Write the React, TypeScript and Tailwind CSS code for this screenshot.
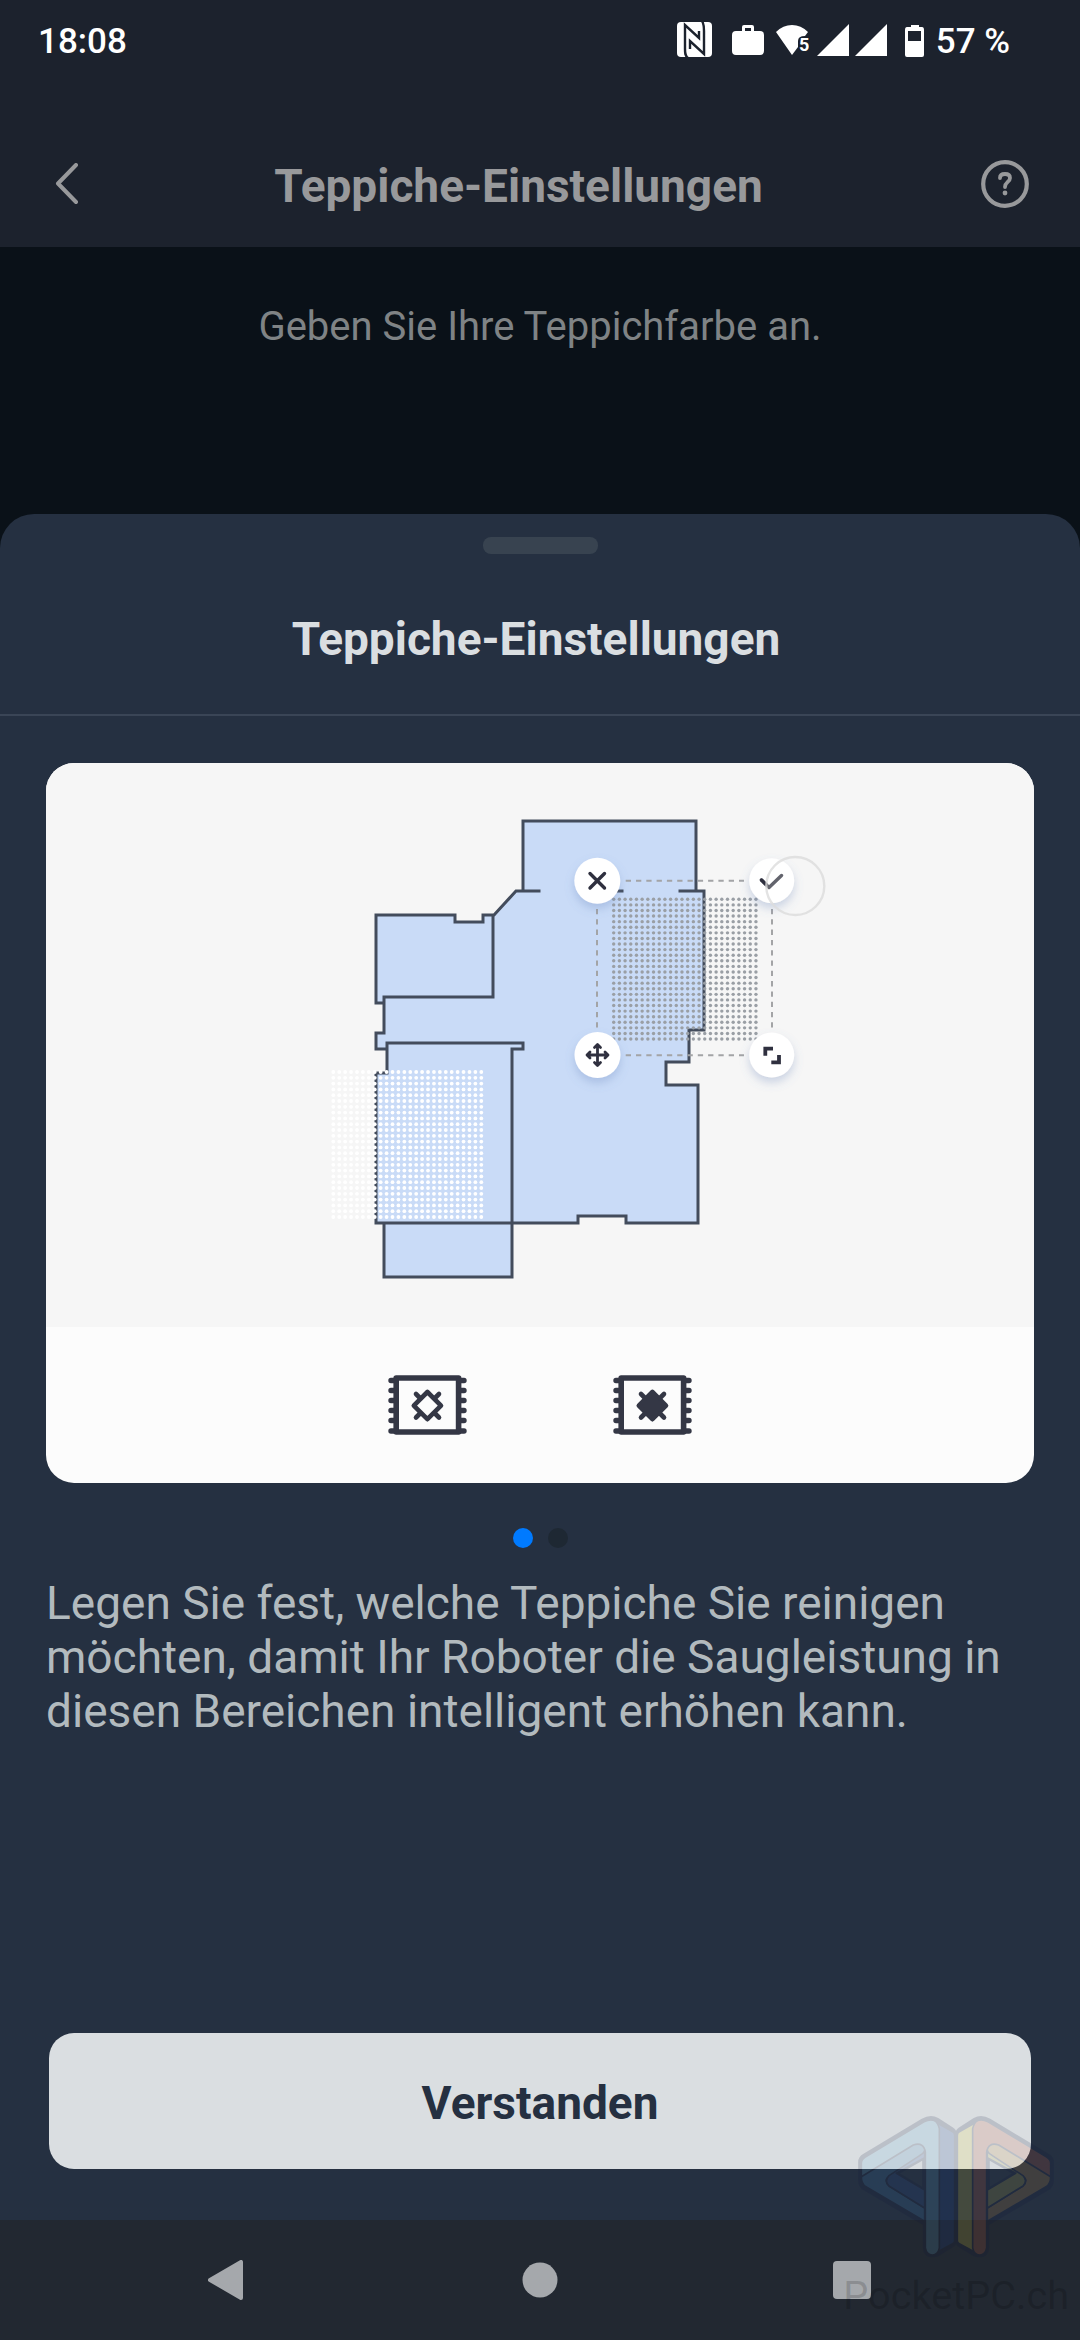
import React from "react";

const FLOOR_LINE = "#434c5c";

const ROOM_OUTLINE =
  "M523 821H696V891H704V1030H689V1062H666V1085H698V1223H626V1216H578V1223H512V1277H384V1223H376V1073H387V1049H376V1033H384V1003H376V915H455V922H483V915H494L516 891H523Z";

const ROOM_WALLS =
  "M523 891V821H696V891M539 891H516L494 915M600 891H622M680 891H704V1030H689V1062H666V1085H698V1223H626V1216H578V1223H376V1073H387V1043H523V1049H512V1277H384V1223M493 915V997H384V1033H376V1049H387M493 915H483V922H455V915H376V1003H384";

const StatusIcons: React.FC = () => (
  <div className="flex items-center text-white">
    <svg className="mr-[19px]" width="36" height="40" viewBox="0 0 36 40" fill="none">
      <rect width="35" height="35" rx="4" fill="currentColor" />
      <path
        d="M11 36C8 34 8 31 8 27V3L22 16V9M25 -1C27 2 27 5 27 9V32L13 19V27"
        stroke="#1c222d"
        strokeWidth="2.4"
      />
    </svg>
    <svg className="mr-3" width="32" height="40" viewBox="0 0 32 40" fill="currentColor">
      <path d="M4 9H10V5Q10 3 12 3H20Q22 3 22 5V9H28Q32 9 32 13V29Q32 33 28 33H4Q0 33 0 29V13Q0 9 4 9ZM13 6V9H19V6Z" fillRule="evenodd" />
    </svg>
    <svg className="mr-2" width="33" height="40" viewBox="0 0 33 40" fill="currentColor">
      <path d="M0 10Q7 3 16 3T32 10L29 14Q22 14 22 19V25L16 33Z" />
      <text x="23" y="29" fontSize="18" fontWeight="700" fontFamily="Roboto">5</text>
    </svg>
    <svg className="mr-1.5" width="32" height="40" viewBox="0 0 32 40" fill="currentColor">
      <path d="M0 34L32 2V34Z" />
    </svg>
    <svg className="mr-[18px]" width="32" height="40" viewBox="0 0 32 40" fill="currentColor">
      <path d="M0 34L32 2V34Z" />
    </svg>
    <svg className="mr-3" width="19" height="40" viewBox="0 0 19 40" fill="currentColor">
      <path d="M2 5H6V3H14V5H17Q19 5 19 8V33Q19 35 17 35H2Q0 35 0 33V8Q0 5 2 5ZM3 9V19H16V9Z" fillRule="evenodd" />
    </svg>
    <span>57 %</span>
  </div>
);

type DotsProps = { x: number; y: number; dx: number; dy: number; r: number; fill: string };

const CarpetDots: React.FC<DotsProps> = ({ x, y, dx, dy, r, fill }) => (
  <g fill={fill}>
    {Array.from({ length: 26 * 26 }, (_, i) => (
      <circle key={i} cx={x + (i % 26) * dx} cy={y + Math.floor(i / 26) * dy} r={r} />
    ))}
  </g>
);

const FloorPlan: React.FC = () => (
  <svg className="block w-full h-auto bg-[#f6f6f6]" viewBox="46 763 988 564" fill="none">
    <defs>
      <filter id="knob" x="-40%" y="-40%" width="180%" height="200%">
        <feDropShadow dx="0" dy="5" stdDeviation="5" floodColor="#5f7fb5" floodOpacity="0.3" />
      </filter>
    </defs>
    <path d={ROOM_OUTLINE} fill="#c9dbf7" />
    <path d={ROOM_WALLS} stroke={FLOOR_LINE} strokeWidth="3" strokeLinecap="square" />
    <CarpetDots x={333.3} y={1072} dx={5.92} dy={5.8} r={1.9} fill="#ffffff" />
    <CarpetDots x={613.7} y={899.3} dx={5.69} dy={5.59} r={1.7} fill="#9a9fa5" />
    <path
      d="M625.7 880.7H744M625.7 1055.3H744M597 909V1028M772 909V1028"
      stroke="#a3a4a6"
      strokeWidth="2"
      strokeDasharray="5.3 5"
    />
    <g fill="#ffffff" filter="url(#knob)">
      <circle cx="597.3" cy="880.7" r="23" />
      <circle cx="771.7" cy="880.7" r="22.5" />
      <circle cx="597.5" cy="1055" r="23" />
      <circle cx="771.7" cy="1055" r="22.5" />
    </g>
    <g stroke="#2f303f" strokeWidth="3.4" strokeLinecap="round" strokeLinejoin="round">
      <path d="M590 873.5L604.5 888M604.5 873.5L590 888" />
      <path
        d="M597.5 1045V1065M587.5 1055H607.5M594.5 1047.5L597.5 1044.5L600.5 1047.5M594.5 1062.5L597.5 1065.5L600.5 1062.5M590 1052L587 1055L590 1058M605 1052L608 1055L605 1058"
        strokeWidth="2.8"
      />
      <path d="M761.5 880L769 887.5L781.5 875.5" stroke="#63646d" />
      <path d="M761.5 880L766 884.5" />
    </g>
    <path d="M765.3 1055.7V1048.7H773M771.3 1062.3H779V1055" stroke="#2f303f" strokeWidth="3.8" />
    <circle cx="795.3" cy="886" r="29" stroke="#dcdcdc" strokeOpacity="0.8" strokeWidth="2.4" />
  </svg>
);

const CarpetIcon: React.FC<{ filled?: boolean }> = ({ filled }) => (
  <svg width="79" height="60" viewBox="0 0 79 60" fill="none" stroke="#343745">
    <rect x="8.2" y="3" width="62.4" height="54" strokeWidth="5.6" strokeLinejoin="round" />
    <path
      d="M3 5.5H8M3 15.5H8M3 25.5H8M3 35.5H8M3 45.5H8M3 56H8M71 5.5H76M71 15.5H76M71 25.5H76M71 35.5H76M71 45.5H76M71 56H76"
      strokeWidth="5.4"
      strokeLinecap="round"
    />
    <path
      d="M39.4 17L53 30.6L39.4 44.2L25.8 30.6Z"
      fill={filled ? "#343745" : "none"}
      strokeWidth="4.6"
      strokeLinejoin="round"
    />
    <path
      d="M28 19L32 23M51 19L47 23M28 42.5L32 38.5M51 42.5L47 38.5"
      strokeWidth="4.6"
      strokeLinecap="round"
    />
  </svg>
);

type LogoHalfProps = { side: string; front: string; band: string; inner: string };

const LogoHalf: React.FC<LogoHalfProps> = ({ side, front, band, inner }) => (
  <g stroke="#0a1238" strokeWidth="5" strokeLinejoin="round">
    <path
      d="M308 121Q332 107 352 119L396 147Q404 152 404 160V484Q404 492 396 497L352 524Q314 534 314 500V432L134 326Q120 318 120 302V246Q120 234 132 227ZM229 280L312 330V233Z"
      fill="#0a1238"
      fillRule="evenodd"
      strokeWidth="11"
    />
    <path d="M345 125L398 155Q404 158 404 166V482Q404 488 398 491L345 520Z" fill={side} />
    <path d="M124 290Q124 312 138 320L314 424V384L207 318Q190 302 207 285L290 192Z" fill={band} />
    <path d="M124 290L280 195Q312 185 315 217L207 287L180 310Z" fill={band} stroke="none" />
    <path d="M229 280L314 330V384L207 318Q192 302 207 287L300 226Q314 218 314 210V233Z" fill={inner} />
    <path
      d="M124 290V250Q124 238 136 231L312 125Q350 108 358 146V504Q354 525 337 525T316 504V217Q312 185 280 195Z"
      fill={front}
    />
  </g>
);

const Watermark: React.FC = () => (
  <svg
    className="absolute bottom-0 right-0 pointer-events-none"
    width="260"
    height="260"
    viewBox="0 0 780 780"
  >
    <g opacity="0.14">
      <LogoHalf side="#0f3c9b" front="#62b9e4" band="#3c90cc" inner="#2450a8" />
      <g transform="matrix(-1 0 0 1 816 0)">
        <LogoHalf side="#ffe632" front="#e06038" band="#e09a38" inner="#d8c840" />
      </g>
    </g>
    <text x="70" y="688" fontSize="119" fontFamily="Roboto" fill="#000000" fillOpacity="0.17">
      PocketPC.ch
    </text>
  </svg>
);

const App: React.FC = () => {
  return (
    <div className="relative flex min-h-screen flex-col bg-[#0a1118] font-['Roboto',sans-serif]">
      <header className="bg-[#1c222d]">
        <div className="flex h-21 items-center justify-between pl-[38px] pr-[70px] text-[35px] leading-[42px] font-medium text-white">
          <span>18:08</span>
          <StatusIcons />
        </div>
        <div className="flex h-[163px] items-center pl-[54px] pr-[51px] pt-10 text-[#98999b]">
          <button aria-label="Zurück">
            <svg width="26" height="46" viewBox="0 0 26 46" fill="none">
              <path d="M22 2L4 20.5L22 39" stroke="currentColor" strokeWidth="4" strokeLinecap="round" strokeLinejoin="round" />
            </svg>
          </button>
          <h1 className="flex-1 pr-6 text-center text-[46px] leading-[54px] font-bold">
            Teppiche-Einstellungen
          </h1>
          <button aria-label="Hilfe">
            <svg width="48" height="52" viewBox="0 0 48 52" fill="none" stroke="currentColor" strokeLinecap="round">
              <circle cx="24" cy="24" r="21.8" strokeWidth="4.2" />
              <path d="M19 18Q19 14 24 14T29 18C29 22 24 22 24 27" strokeWidth="3.8" />
              <circle cx="24" cy="33" r="2.4" fill="currentColor" stroke="none" />
            </svg>
          </button>
        </div>
      </header>

      <p className="px-12 pt-14 pb-[163px] text-center text-[40px] leading-[48px] text-[#7f8385]">
        Geben Sie Ihre Teppichfarbe an.
      </p>

      <section className="flex flex-1 flex-col rounded-t-[34px] bg-[#253041]">
        <div className="mx-auto mt-[23px] h-[17px] w-[115px] rounded-lg bg-[#384350]" />
        <h2 className="mt-[58px] pr-2 pb-12 text-center text-[46px] leading-[54px] font-bold text-[#dadee1]">
          Teppiche-Einstellungen
        </h2>
        <hr className="border-t-2 border-[#3a4556]" />
        <div className="mx-[46px] mt-[47px] overflow-hidden rounded-[28px] bg-[#fcfcfc]">
          <FloorPlan />
          <div className="flex h-39 items-center justify-center gap-[146px]">
            <CarpetIcon />
            <CarpetIcon filled />
          </div>
        </div>
        <div className="mt-[45px] flex justify-center gap-[15px]">
          <span className="size-5 rounded-full bg-[#007aff]" />
          <span className="size-5 rounded-full bg-[#1e2833]" />
        </div>
        <p className="mx-[46px] mt-7 mb-12 text-[46px] leading-[54px] text-[#b2babe]">
          Legen Sie fest, welche Teppiche Sie reinigen möchten, damit Ihr Roboter die Saugleistung in
          diesen Bereichen intelligent erhöhen kann.
        </p>
        <button className="mx-[49px] mt-auto mb-[51px] h-34 rounded-[25px] bg-[#dadee1] pt-1 text-[46px] leading-[54px] font-bold text-[#253041]">
          Verstanden
        </button>
      </section>

      <nav className="flex h-30 items-center justify-center gap-[272px] bg-[#222831] text-[#a5a8ac]">
        <button aria-label="Zurück">
          <svg width="40" height="40" viewBox="0 0 40 40" fill="currentColor" stroke="currentColor" strokeWidth="4" strokeLinejoin="round">
            <path d="M2 20L33 2V38Z" />
          </svg>
        </button>
        <button aria-label="Startseite">
          <svg width="40" height="40" viewBox="0 0 40 40" fill="currentColor">
            <circle cx="20" cy="20" r="17.5" />
          </svg>
        </button>
        <button aria-label="Übersicht">
          <svg width="40" height="40" viewBox="0 0 40 40" fill="currentColor">
            <rect x="1" y="1" width="38" height="38" rx="4" />
          </svg>
        </button>
      </nav>

      <Watermark />
    </div>
  );
};

export default App;
